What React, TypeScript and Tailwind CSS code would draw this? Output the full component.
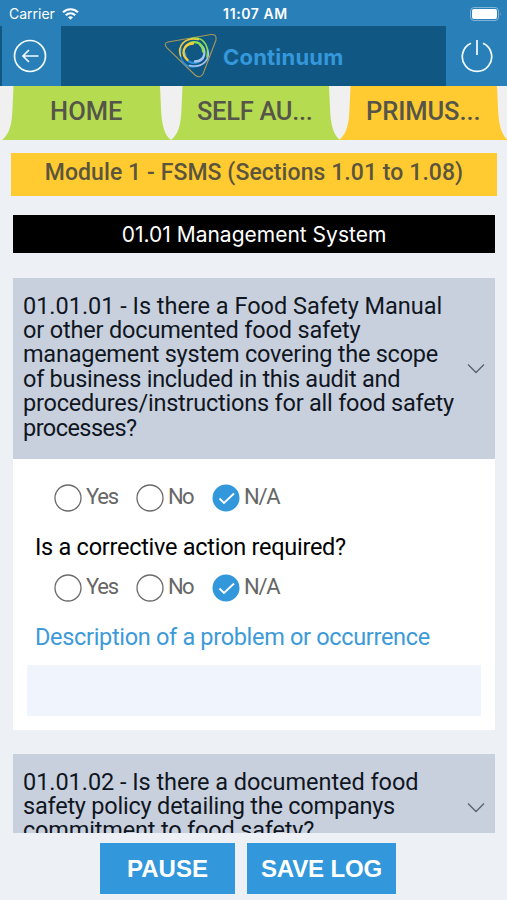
import type { FC, ReactNode } from 'react'

type TabProps = { label: string; fill: string; text: string }

const Tab: FC<TabProps> = ({ label, fill, text }) => (
  <div className="relative h-[54px] w-[168.500px] shrink-0 text-center">
    <svg className="absolute inset-0" width="169" height="54" viewBox="0 0 169 54" fill={fill}>
      <path d="M0 54C8 48 10 37 10.500 22L11.500 0H158L159 22C159.500 37 162 49 169 54Z" />
    </svg>
    <span className={`relative block whitespace-nowrap text-[25.500px] leading-[51px] font-medium text-[#55554a] ${text}`}>
      {label}
    </span>
  </div>
)

const Chevron: FC = () => (
  <svg className="shrink-0" width="18" height="10" viewBox="0 0 18 10" fill="none" stroke="#59636e" strokeWidth="1.400">
    <path d="M1 0.500L9 8.500L17 0.500" />
  </svg>
)

const Circle: FC<{ checked?: boolean }> = ({ checked }) => (
  <svg width="28" height="28" viewBox="0 0 28 28" fill="none">
    {checked ? (
      <>
        <circle cx="14" cy="14" r="13.500" fill="#3297db" />
        <path d="M7.500 14.500L12 19L22 9.500" stroke="#fff" strokeWidth="1.800" />
      </>
    ) : (
      <circle cx="14" cy="14" r="13" stroke="#6b6b6b" strokeWidth="1.300" />
    )}
  </svg>
)

const Answers: FC = () => (
  <div className="flex h-7 pl-[41px] text-[22px] leading-[25px] text-[#666]">
    <div className="flex w-[82px] gap-[4px]">
      <Circle />
      <span className="tracking-[-1.200px]">Yes</span>
    </div>
    <div className="flex w-[76px] gap-[4px]">
      <Circle />
      <span className="tracking-[-1.700px]">No</span>
    </div>
    <div className="flex gap-[4px]">
      <Circle checked />
      <span className="tracking-[-1.300px]">N/A</span>
    </div>
  </div>
)

const Line: FC<{ className: string; children: ReactNode }> = ({ className, children }) => (
  <span className={`block whitespace-nowrap ${className}`}>{children}</span>
)

// one blade of the swirl, turned around its centre
const Blade: FC<{ color: string; angle: number }> = ({ color, angle }) => (
  <g stroke={color} transform={`rotate(${angle} 30 19.500)`}>
    <path d="M23.500 27C17 21.500 18.500 11 29 10.500" strokeWidth="2.300" />
    <path d="M16.500 23C13 13 21 3.500 34.500 6.500" strokeWidth="1.500" />
  </g>
)

const Logo: FC = () => (
  <svg width="54" height="46" viewBox="0 0 54 46" fill="none" strokeLinecap="round">
    <path
      d="M4 9L47 1.500Q53 1 52 7L39 41Q36 46 31 42L3 15Q-1 10 4 9Z"
      stroke="#a99757"
      strokeWidth="1.100"
    />
    <Blade color="#2b91dc" angle={270} />
    <Blade color="#a9c6ee" angle={180} />
    <Blade color="#8ce04e" angle={90} />
    <Blade color="#f4cb3f" angle={0} />
  </svg>
)

const StatusBar: FC = () => (
  <div className="grid h-[26px] grid-cols-3 items-center bg-[#2980b9] pt-[2px] pr-[5px] pl-[9px] font-['Inter','Liberation_Sans',sans-serif] text-[14px] leading-[20px] text-white">
    <div className="flex items-center gap-[7px]">
      <span className="tracking-normal">Carrier</span>
      <svg width="17" height="12" viewBox="0 0 17 12" fill="none" stroke="#fff" strokeWidth="2.200">
        <path d="M1 4.300C5.200 0.200 11.800 0.200 16 4.300" />
        <path d="M3.800 7.200C6.500 4.700 10.500 4.700 13.200 7.200" />
        <path d="M6 9.200Q8.500 7.100 11 9.200L8.500 11.800Z" fill="#fff" stroke="none" />
      </svg>
    </div>
    <span className="text-center text-[14px] font-semibold tracking-[0.600px]">11:07 AM</span>
    <svg className="justify-self-end" width="32" height="14" viewBox="0 0 32 14" fill="none">
      <rect x="0.500" y="0.500" width="28" height="13" rx="3.500" stroke="#82b4d8" />
      <rect x="2" y="2" width="25" height="10" rx="2" fill="#fff" />
      <path d="M30 5Q31.500 7 30 9Z" fill="#82b4d8" />
    </svg>
  </div>
)

const Header: FC = () => (
  <div className="flex h-[60px] bg-[#115784]">
    <button className="ml-[2px] flex w-[59px] items-center justify-center bg-[#2980b9] pr-[3px]">
      <svg width="34" height="34" viewBox="0 0 34 34" fill="none" stroke="#f4fbff" strokeWidth="1.700">
        <circle cx="17" cy="17" r="15.500" />
        <path d="M25.500 17H10M16 11L10 17L16 23" />
      </svg>
    </button>
    <div className="flex grow items-center pl-[103px]">
      <Logo />
      <span className="pt-[3px] pl-[5px] font-['Inter','Liberation_Sans',sans-serif] text-[22px] font-bold tracking-[0.200px] text-[#3498db]">
        Continuum
      </span>
    </div>
    <button className="flex w-[61px] items-center justify-center bg-[#2980b9]">
      <svg width="32" height="34" viewBox="0 0 32 34" fill="none" stroke="#f4fbff" strokeWidth="1.700">
        <path d="M16 1V16M10 4.300A14.700 14.700 0 1 0 22 4.300" />
      </svg>
    </button>
  </div>
)

const App: FC = () => {
  return (
    <div className="flex h-[900px] w-[507px] flex-col overflow-hidden bg-[#edf1f5] font-['Roboto','Liberation_Sans',sans-serif]">
      <StatusBar />
      <Header />
      <div className="flex h-[54px] bg-[#f0f0f0] pl-[2px]">
        <Tab label="HOME" fill="#b5dc50" text="tracking-normal" />
        <Tab label="SELF AU..." fill="#b5dc50" text="tracking-[-0.300px]" />
        <Tab label="PRIMUS..." fill="#ffcb31" text="tracking-[-0.100px]" />
      </div>

      <div className="mr-[10px] ml-[11px] mt-[13px] h-[43px] shrink-0 bg-[#ffcb31] text-center text-[23px] leading-[40px] font-medium tracking-[0.070px] whitespace-nowrap text-[#5c553d]">
        <span>Module 1 - FSMS (Sections 1.01 to 1.08)</span>
      </div>
      <div className="mr-[12px] ml-[13px] mt-[19px] h-[38px] shrink-0 bg-black text-center font-['Inter','Liberation_Sans',sans-serif] text-[21px] leading-[39px] whitespace-nowrap text-white">
        <span>01.01 Management System</span>
      </div>

      <div className="mr-[12px] ml-[13px] mt-[25px] h-[555px] shrink-0 overflow-hidden">
        <div className="flex h-[181px] items-center justify-between bg-[#c8d0de] pr-[10px] pl-[10px]">
          <div className="h-[150px] text-[23.500px] leading-[24.400px] text-[#10161f]">
            <Line className="tracking-[-0.020px]">01.01.01 - Is there a Food Safety Manual</Line>
            <Line className="tracking-[-0.170px]">or other documented food safety</Line>
            <Line className="tracking-[-0.240px]">management system covering the scope</Line>
            <Line className="tracking-[-0.270px]">of business included in this audit and</Line>
            <Line className="tracking-[-0.220px]">procedures/instructions for all food safety</Line>
            <Line className="tracking-[-0.550px]">processes?</Line>
          </div>
          <Chevron />
        </div>
        <div className="h-[271px] bg-white pt-[25px]">
          <Answers />
          <p className="mt-[21px] pl-[22px] text-[23.500px] leading-[28px] tracking-[-0.270px] text-black">
            <span>Is a corrective action required?</span>
          </p>
          <div className="mt-[13px]">
            <Answers />
          </div>
          <p className="mt-[21px] pl-[22px] text-[23.500px] leading-[28px] tracking-[-0.320px] text-[#3d9ad9]">
            <span>Description of a problem or occurrence</span>
          </p>
          <div className="mx-[14px] mt-[14px] h-[51px] bg-[#f0f4fc]" />
        </div>
        <div className="mt-[24px] flex h-[108px] items-center justify-between bg-[#c8d0de] pr-[10px] pl-[10px]">
          <div className="h-[77px] text-[23.500px] leading-[24.400px] text-[#10161f]">
            <Line className="tracking-[-0.050px]">01.01.02 - Is there a documented food</Line>
            <Line className="tracking-[-0.220px]">safety policy detailing the companys</Line>
            <Line className="tracking-[-0.180px]">commitment to food safety?</Line>
          </div>
          <Chevron />
        </div>
      </div>

      <div className="mt-[10px] flex gap-[12px] pl-[100px] font-['Liberation_Sans',sans-serif] text-[24px] leading-[52px] font-bold text-white">
        <button className="h-[51px] w-[135px] bg-[#3297db]">PAUSE</button>
        <button className="h-[51px] w-[149px] bg-[#3297db] tracking-[-0.150px] whitespace-nowrap">SAVE LOG</button>
      </div>
    </div>
  )
}

export default App
